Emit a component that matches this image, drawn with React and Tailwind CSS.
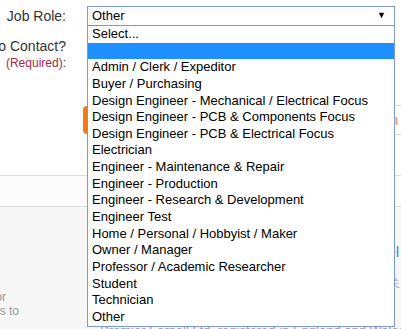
import React from 'react';

const roles = [
    'Select...',
    '',
    'Admin / Clerk / Expeditor',
    'Buyer / Purchasing',
    'Design Engineer - Mechanical / Electrical Focus',
    'Design Engineer - PCB & Components Focus',
    'Design Engineer - PCB & Electrical Focus',
    'Electrician',
    'Engineer - Maintenance & Repair',
    'Engineer - Production',
    'Engineer - Research & Development',
    'Engineer Test',
    'Home / Personal / Hobbyist / Maker',
    'Owner / Manager',
    'Professor / Academic Researcher',
    'Student',
    'Technician',
    'Other',
];

const App = () => {
    return (
        <div className="relative w-[401px] h-[329px] overflow-hidden bg-white text-[#333] font-['Liberation_Sans',Arial,sans-serif]">
            {/* Job role row */}
            <div className="flex pt-[6px]">
                <div className="w-[66px] flex justify-end text-[14px] leading-[20px] whitespace-nowrap">Job Role:</div>
                <div className="ml-[21px] w-[308px] h-[20px] border border-[#7a9ad6] bg-white flex items-center justify-between pl-[4px] pr-[8px] text-[13px] text-black">
                    <span>Other</span>
                    <span className="text-[9px]">▼</span>
                </div>
            </div>

            {/* Contact row */}
            <div className="flex mt-[12px]">
                <div className="w-[66px] flex flex-col items-end whitespace-nowrap">
                    <div className="text-[14px] leading-[17px]">Who to Contact?</div>
                    <div className="text-[12px] leading-[17px]"><span className="text-[#a4284b]">(Required)</span>:</div>
                </div>
            </div>

            {/* Button row */}
            <div className="flex mt-[33px] h-[30px]">
                <div className="ml-[83px] mt-[1px] w-[120px] h-[28px] rounded-l-[4px] bg-[#f07d1a]"></div>
                <div className="flex-1 h-[30px] border-y border-[#ddd] flex items-center justify-end pr-[3px] text-[14px] text-[#f07d1a]">Sign In</div>
            </div>

            {/* Divider strip */}
            <div className="mt-[40px] h-[32px] border-y border-[#ddd] bg-[#fcfcfc]"></div>

            {/* Footer */}
            <div className="relative h-[130px] bg-[#f7f7f7] text-[#999]">
                <div className="flex justify-end pr-[2px] pt-[37px] text-[14px] text-[#5a7aa8] leading-[16px]">Tel</div>
                <div className="flex justify-end pr-[1px] mt-[16px] text-[11px] leading-[14px] text-[#aaa]">关</div>
                <div className="flex">
                    <div className="w-[6px] flex justify-end whitespace-nowrap text-[12px] leading-[14px]">for</div>
                </div>
                <div className="flex">
                    <div className="w-[19px] flex justify-end whitespace-nowrap text-[12px] leading-[14px]">others to</div>
                </div>
                <div className="pl-[100px] mt-[5px] whitespace-nowrap text-[13px] leading-[16px]">Premier Farnell Ltd. registered in England and Wales (no 00876412)</div>
            </div>

            {/* Open dropdown list */}
            <div className="absolute left-[87px] top-[26px] w-[308px] border-x border-b border-[#7a9ad6] bg-white text-[13px] text-black">
                {roles.map((role, i) => (
                    <div key={i} className={`h-[16.65px] leading-[16.65px] pl-[4px] whitespace-nowrap ${i === 1 ? 'bg-[#1e90ff]' : ''}`}>{role}</div>
                ))}
            </div>
        </div>
    );
};

export default App;
